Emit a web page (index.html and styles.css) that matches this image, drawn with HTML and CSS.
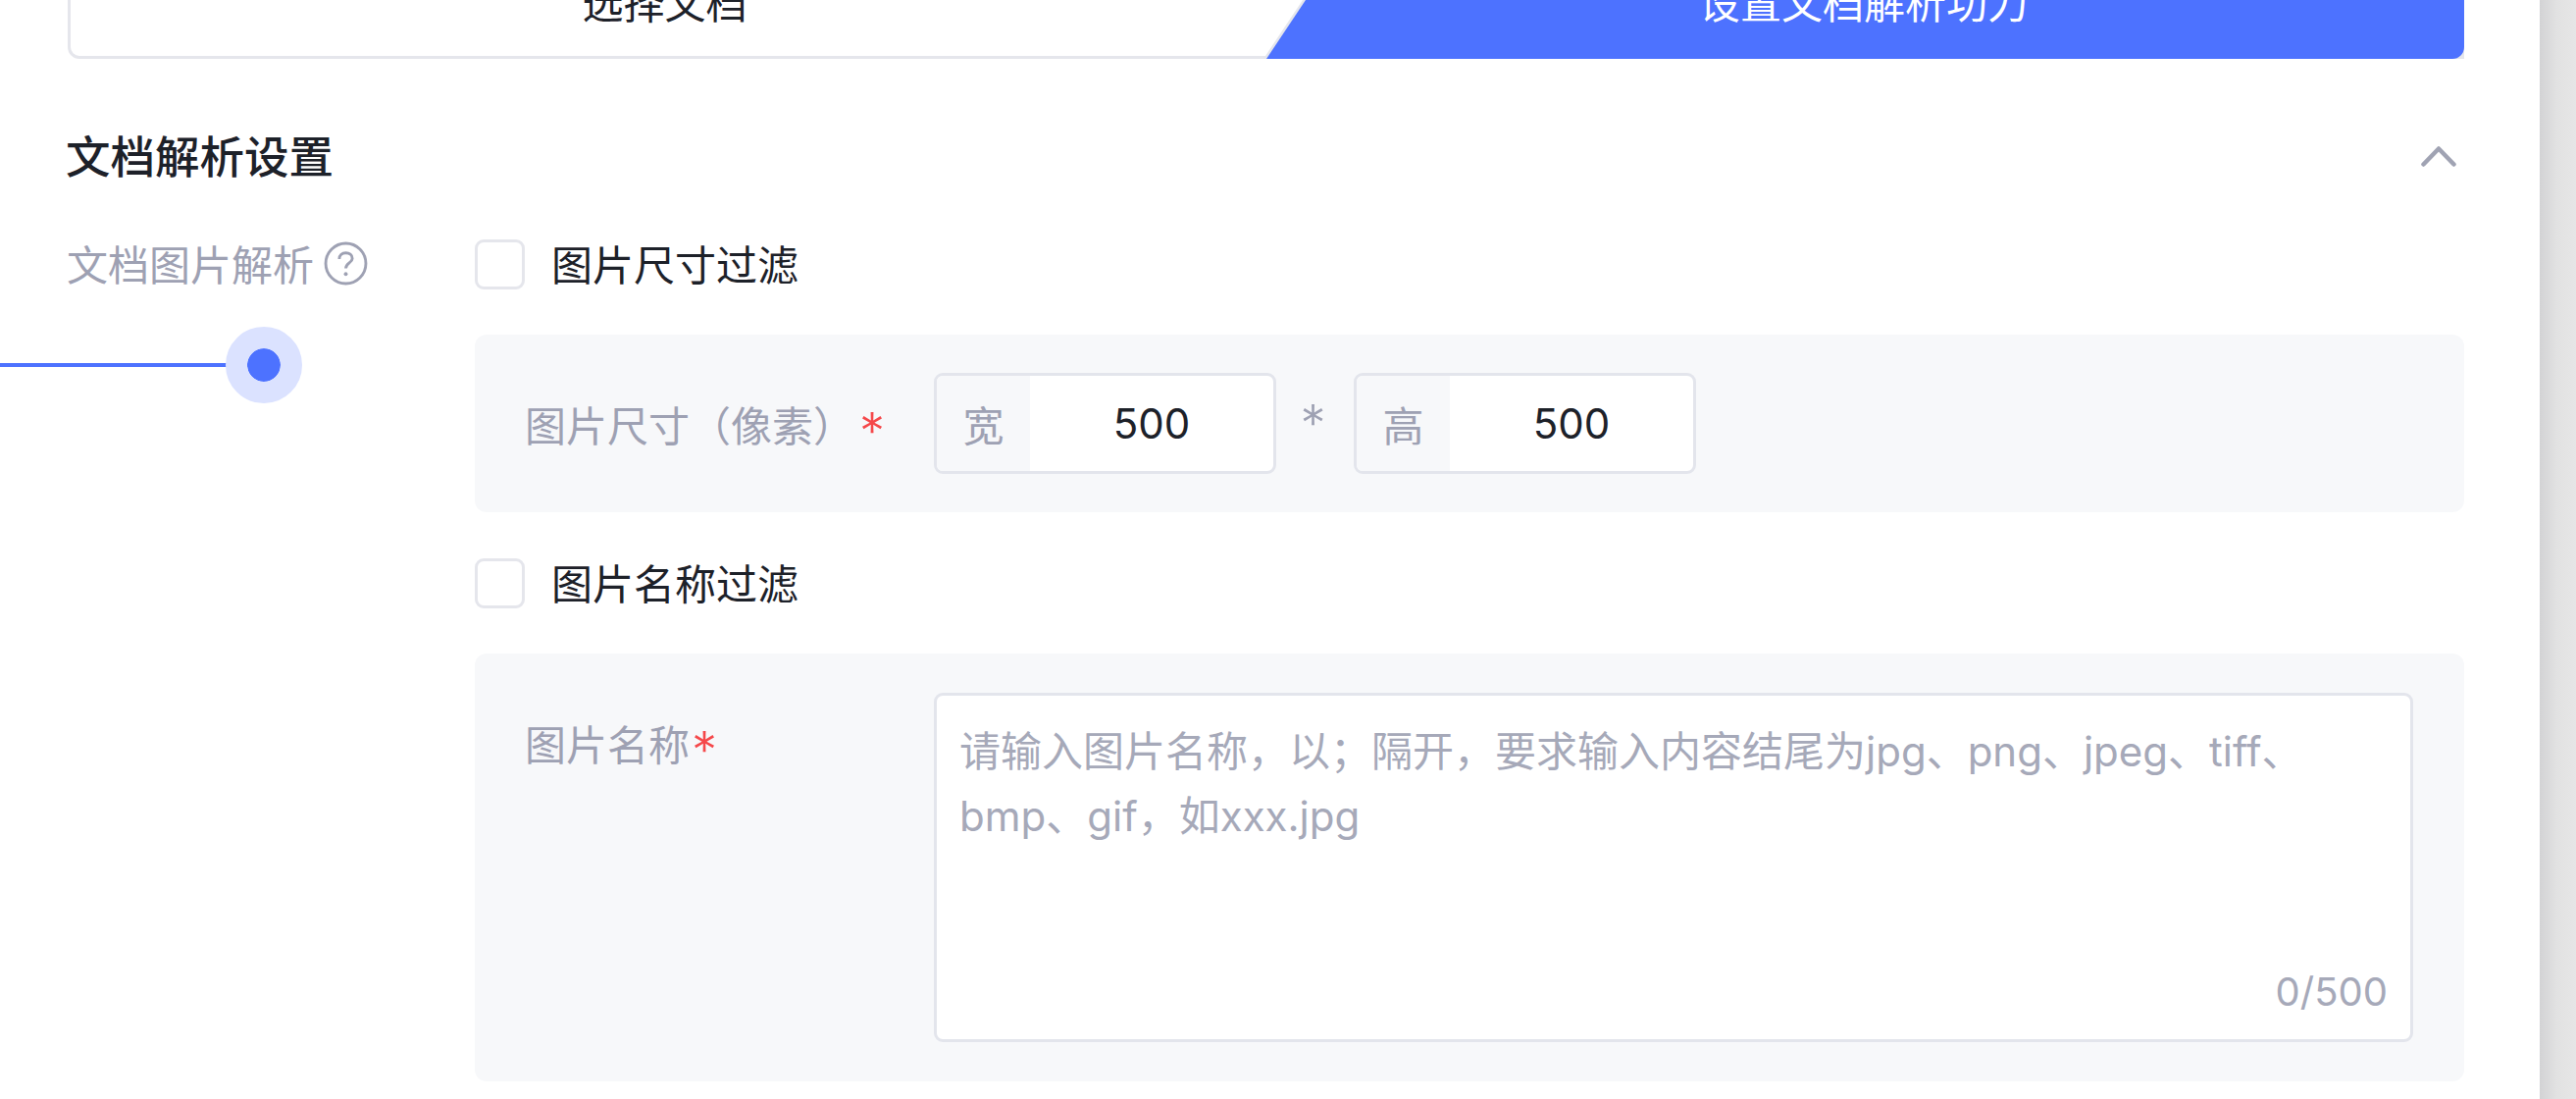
FILE: index.html
```html
<!DOCTYPE html>
<html lang="zh-CN">
<head>
<meta charset="utf-8">
<title>文档解析设置</title>
<link rel="stylesheet" href="styles.css">
</head>
<body>
<main class="main">
  <div class="steps">
    <div class="step step-idle">选择文档</div>
    <div class="step step-active"><span class="step-fill">设置文档解析功力</span></div>
  </div>

  <div class="section-head">
    <h2 class="section-title">文档解析设置</h2>
    <svg class="chevron" viewBox="0 0 36 22" aria-hidden="true"><path d="M2.500 19.500 L18 3.500 L33.500 19.500" /></svg>
  </div>

  <div class="form-row">
    <div class="form-label">
      <span>文档图片解析</span>
      <svg class="help" viewBox="0 0 44 44" aria-hidden="true">
        <circle cx="22" cy="22" r="20" />
        <path d="M15.500 17.500 C15.500 13.500 18.500 11.500 22 11.500 C25.500 11.500 28.500 13.500 28.500 17 C28.500 21.500 22 21.500 22 27" />
        <circle class="help-dot" cx="22" cy="32.500" r="1.900" />
      </svg>
    </div>
    <div class="form-body">
      <label class="check"><span class="check-box"></span><span class="check-text">图片尺寸过滤</span></label>
      <div class="panel panel-size">
        <div class="field-label">图片尺寸（像素）<span class="req req-gap">*</span></div>
        <div class="num-box"><span class="addon">宽</span><span class="num-value">500</span></div>
        <span class="times">*</span>
        <div class="num-box"><span class="addon">高</span><span class="num-value">500</span></div>
      </div>
      <label class="check"><span class="check-box"></span><span class="check-text">图片名称过滤</span></label>
      <div class="panel panel-name">
        <div class="field-label field-label-top">图片名称<span class="req">*</span></div>
        <div class="textarea">
          <div class="placeholder">请输入图片名称，以；隔开，要求输入内容结尾为jpg、png、jpeg、tiff、bmp、gif，如xxx.jpg</div>
          <span class="counter">0/500</span>
        </div>
      </div>
    </div>
  </div>

  <div class="slider" aria-hidden="true"><span class="slider-line"></span><span class="slider-dot"></span></div>
</main>
<div class="edge"></div>
</body>
</html>
```

FILE: styles.css
```css
* { box-sizing: border-box; }
html, body { margin: 0; height: 100%; }
body {
  display: flex;
  width: 2626px;
  height: 1120px;
  overflow: hidden;
  background: #fff;
  font-family: "Inter", "Noto Sans CJK SC", sans-serif;
  font-size: 42px;
  color: #1d2129;
}
.main {
  position: relative;
  flex: 0 0 2589px;
  padding: 0 77px 0 69px;
}
.edge {
  flex: 1;
  background: linear-gradient(90deg, #d3d3d5 0, #e2e2e2 18px, #e6e6e6 100%);
}

/* steps */
.steps {
  display: flex;
  height: 120px;
  margin-top: -60px;
}
.step {
  display: flex;
  align-items: center;
  justify-content: center;
}
.step-idle {
  flex: 1;
  margin-right: -160px;
  padding-right: 162px;
  border: 3px solid #e5e6ec;
  border-radius: 12px;
  color: #1d2129;
}
.step-active {
  position: relative;
  flex: 0 0 1224px;
  background: #e5e6ec;
  clip-path: polygon(80px 0, 100% 0, 100% 100%, 0 100%);
}
.step-fill {
  position: absolute;
  inset: 0;
  display: flex;
  align-items: center;
  justify-content: center;
  background: #4d72ff;
  color: #fff;
  border-radius: 0 12px 12px 0;
  clip-path: polygon(83px 0, 100% 0, 100% 100%, 3px 100%);
}

/* section head */
.section-head {
  display: flex;
  align-items: center;
  justify-content: space-between;
  height: 60px;
  margin-top: 69px;
  padding-right: 8px;
}
.section-title {
  margin: -4px 0 0 -2px;
  font-size: 45.500px;
  font-weight: 500;
  color: #1d2129;
}
.chevron { width: 36px; height: 22px; }
.chevron path {
  fill: none;
  stroke: #a0a3b3;
  stroke-width: 4.500;
  stroke-linecap: round;
  stroke-linejoin: round;
}

/* form */
.form-row {
  display: grid;
  grid-template-columns: 415px 1fr;
  margin-top: 54px;
}
.form-label {
  display: flex;
  align-items: center;
  gap: 10px;
  height: 51px;
  margin-left: -1px;
  color: #9ea1b3;
}
.form-label span { position: relative; top: -1px; }
.help { width: 45px; height: 45px; }
.help circle, .help path {
  fill: none;
  stroke: #9ea1b3;
  stroke-width: 2.800;
}
.help .help-dot { fill: #9ea1b3; stroke: none; }

.check {
  display: flex;
  align-items: center;
  gap: 27px;
  height: 52px;
}
.check-text { margin-top: -3px; }
.check-box {
  width: 51px;
  height: 51px;
  border: 3px solid #e5e6ec;
  border-radius: 9px;
  background: #fff;
}
.panel {
  display: flex;
  margin: 46px 0;
  padding-left: 51px;
  border-radius: 12px;
  background: #f7f8fa;
}
.panel-size {
  align-items: center;
  height: 181px;
}
.panel-name {
  height: 436px;
  margin-bottom: 0;
  padding-top: 40px;
}
.field-label {
  flex: 0 0 417px;
  color: #9ea1b3;
}
.field-label-top { padding-top: 21px; line-height: 66px; height: 66px; }
.req {
  position: relative;
  top: 8px;
  margin-left: 2px;
  color: #f5484a;
  font-size: 52px;
  font-weight: 300;
  line-height: 1;
}
.req-gap { margin-left: 5px; }
.num-box {
  display: flex;
  width: 349px;
  height: 103px;
  border: 3px solid #e3e5ec;
  border-radius: 9px;
  background: #fff;
  overflow: hidden;
}
.addon {
  flex: 0 0 95px;
  display: flex;
  align-items: center;
  justify-content: center;
  background: #f7f8fa;
  color: #9ea1b3;
}
.num-value {
  flex: 1;
  display: flex;
  align-items: center;
  justify-content: center;
  color: #1d2129;
}
.times {
  flex: 0 0 79px;
  padding-right: 4px;
  text-align: center;
  font-size: 52px;
  font-weight: 300;
  line-height: 60px;
  color: #9ea1b3;
}
.textarea {
  position: relative;
  width: 1508px;
  height: 356px;
  padding: 24px 23px 0;
  border: 3px solid #e3e5ec;
  border-radius: 9px;
  background: #fff;
}
.placeholder {
  line-height: 66px;
  color: #a6a9b9;
}
.counter {
  position: absolute;
  right: 23px;
  bottom: 24px;
  font-size: 40px;
  color: #a6a9b9;
}

/* slider overlay */
.slider {
  position: absolute;
  left: 0;
  top: 333px;
  width: 308px;
  height: 78px;
}
.slider-line {
  position: absolute;
  left: 0;
  right: 39px;
  top: 37px;
  height: 4px;
  background: #4d72ff;
}
.slider-dot {
  position: absolute;
  right: 0;
  top: 0;
  width: 78px;
  height: 78px;
  border: 22.500px solid #dbe2ff;
  border-radius: 50%;
  background: #4d72ff;
  background-clip: padding-box;
}
```
